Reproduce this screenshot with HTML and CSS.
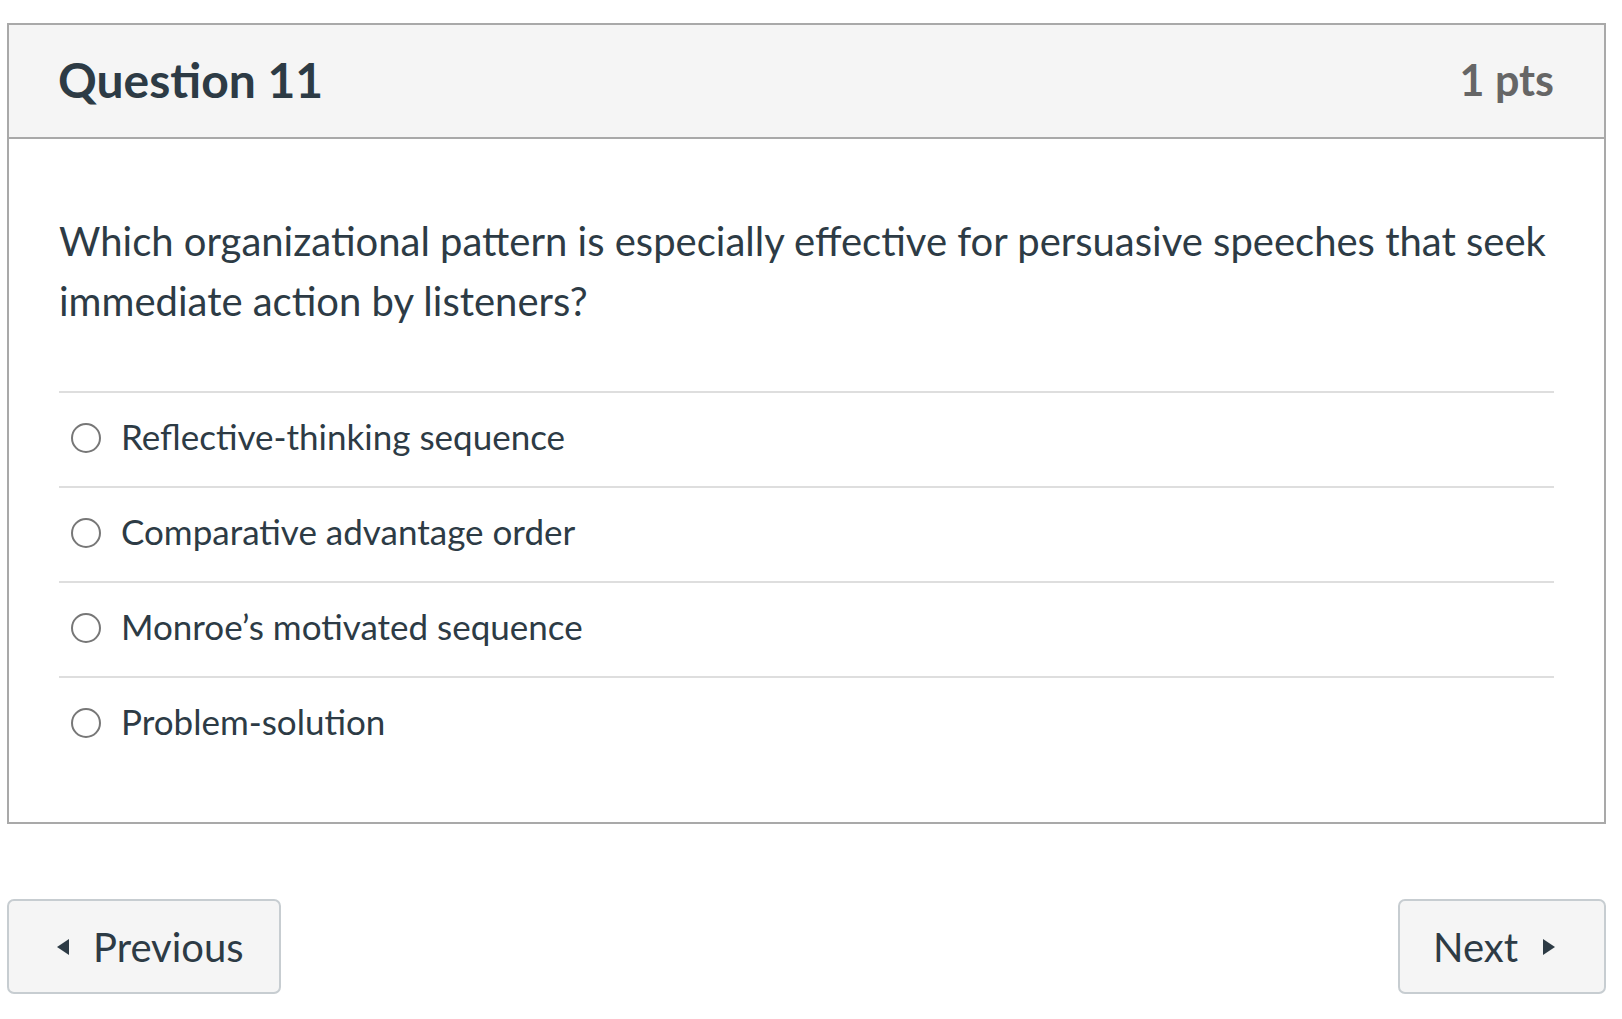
FILE: index.html
```html
<!DOCTYPE html>
<html lang="en">
<head>
<meta charset="utf-8">
<title>Question 11</title>
<link rel="stylesheet" href="styles.css">
</head>
<body>
<div class="page">
  <div class="card">
    <div class="card-header">
      <h2 class="q-title">Question 11</h2>
      <span class="q-pts">1 pts</span>
    </div>
    <div class="card-body">
      <p class="q-text">Which organizational pattern is especially effective for persuasive speeches that seek immediate action by listeners?</p>
      <div class="answers">
        <label class="answer"><span class="radio"></span><span class="answer-text">Reflective-thinking sequence</span></label>
        <label class="answer"><span class="radio"></span><span class="answer-text">Comparative advantage order</span></label>
        <label class="answer"><span class="radio"></span><span class="answer-text">Monroe’s motivated sequence</span></label>
        <label class="answer"><span class="radio"></span><span class="answer-text">Problem-solution</span></label>
      </div>
    </div>
  </div>
  <div class="nav">
    <button class="btn btn-prev"><svg class="tri" width="12" height="16" viewBox="0 0 12 16"><path d="M12 0 L0 8 L12 16 Z"/></svg><span>Previous</span></button>
    <button class="btn btn-next"><span>Next</span><svg class="tri" width="12" height="16" viewBox="0 0 12 16"><path d="M0 0 L12 8 L0 16 Z"/></svg></button>
  </div>
</div>
</body>
</html>
```

FILE: styles.css
```css
* { box-sizing: border-box; }
html, body { margin: 0; padding: 0; background: #fff; }
body {
  font-family: Lato, "Open Sans", "Liberation Sans", sans-serif;
  color: #2d3b45;
}
.page {
  padding: 23px 16px 0 7px;
}
.card {
  border: 2px solid #a9a9a9;
  border-top: 0;
  background: #fff;
}
.card-header {
  height: 116px;
  border-top: 2px solid #a9a9a9;
  border-bottom: 2px solid #a9a9a9;
  background: #f5f5f5;
  display: flex;
  align-items: center;
  justify-content: space-between;
  padding: 0 50px 4px 49px;
}
.q-title {
  margin: 0;
  font-size: 48px;
  font-weight: 700;
  color: #2d3b45;
}
.q-pts {
  font-size: 43px;
  font-weight: 700;
  color: #666;
}
.card-body {
  padding: 72px 50px 51px 50px;
}
.q-text {
  margin: 0 0 60px 0;
  font-size: 40px;
  line-height: 60px;
}
.answers { display: flex; flex-direction: column; }
.answer {
  display: flex;
  align-items: center;
  height: 95px;
  border-top: 2px solid #dedede;
  padding: 0 0 8px 12px;
}
.radio {
  width: 30px;
  height: 30px;
  border: 2px solid #777;
  border-radius: 50%;
  flex: none;
  margin-right: 20px;
  position: relative;
  top: 2px;
}
.answer-text {
  font-size: 35px;
}
.nav {
  display: flex;
  justify-content: space-between;
  margin-top: 75px;
}
.btn {
  height: 95px;
  background: #f5f5f5;
  border: 2px solid #c7cdd1;
  border-radius: 7px;
  color: #2d3b45;
  font-family: Lato, "Open Sans", "Liberation Sans", sans-serif;
  font-size: 40px;
  display: flex;
  align-items: center;
  padding: 0;
}
.tri { fill: #2d3b45; flex: none; }
.btn-prev { width: 274px; padding-left: 48px; }
.btn-prev .tri { margin-right: 24px; }
.btn-next { width: 208px; padding-left: 33px; }
.btn-next .tri { margin-left: 25px; }
```
